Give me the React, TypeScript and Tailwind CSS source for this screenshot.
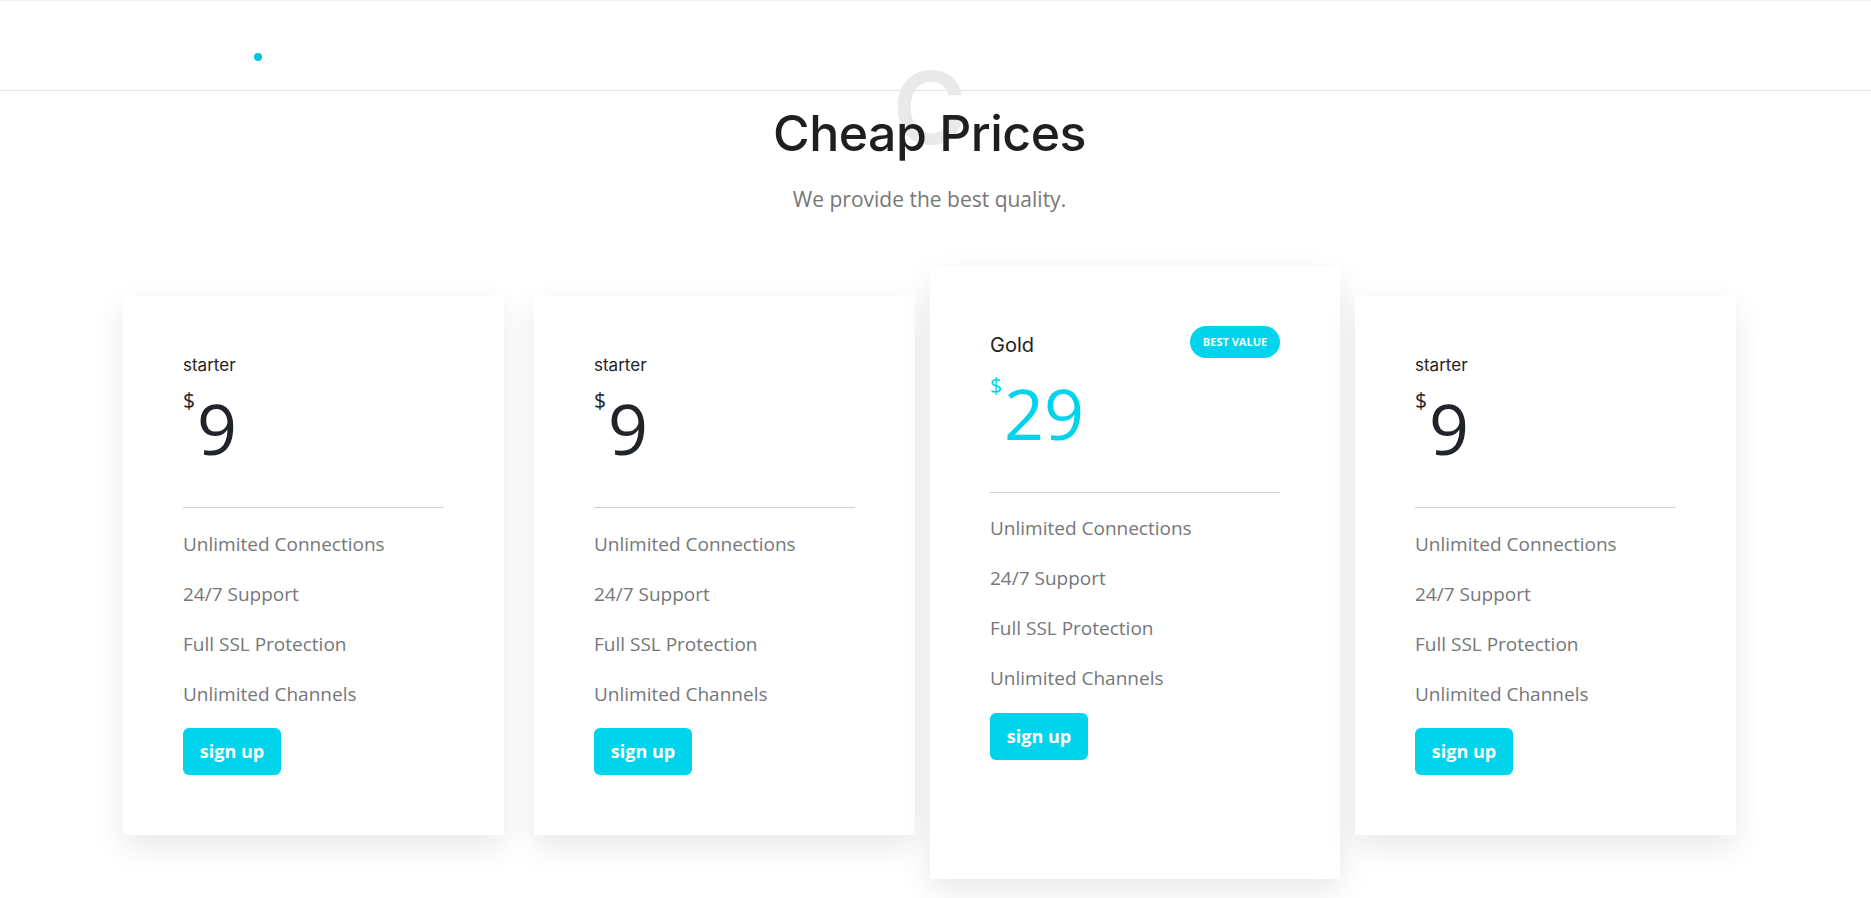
import * as React from "react"

type Plan = {
  name: string
  price: string
  featured?: boolean
}

const plans: Plan[] = [
  { name: "starter", price: "9" },
  { name: "starter", price: "9" },
  { name: "Gold", price: "29", featured: true },
  { name: "starter", price: "9" },
]

const features = [
  "Unlimited Connections",
  "24/7 Support",
  "Full SSL Protection",
  "Unlimited Channels",
]

function PriceCard({ plan }: { plan: Plan }) {
  const gold = !!plan.featured
  return (
    <div
      className={
        gold
          ? "w-[410px] bg-white px-[60px] pt-[60px] pb-[119px] shadow-[0_12px_30px_rgba(0,0,0,0.09)]"
          : "mt-[30px] w-[381px] bg-white px-[60px] pt-[60px] pb-[60px] shadow-[0_12px_30px_rgba(0,0,0,0.09)]"
      }
    >
      {gold ? (
        <div className="flex h-[32px] items-center justify-between">
          <span className="mt-[5px] font-['Inter',sans-serif] text-[20px] text-[#222]">{plan.name}</span>
          <span className="flex h-[32px] w-[90px] items-center justify-center rounded-full bg-[#00d4ec] font-['Open_Sans',sans-serif] text-[11px] font-bold text-white">
            BEST VALUE
          </span>
        </div>
      ) : (
        <div className="h-[24px] font-['Inter',sans-serif] text-[17px] leading-[19px] text-[#222]">
          {plan.name}
        </div>
      )}

      <div
        className={
          gold
            ? "mt-[20px] flex h-[72px] items-start font-['Open_Sans',sans-serif] text-[#00d4ec]"
            : "mt-[13px] flex h-[72px] items-start font-['Open_Sans',sans-serif] text-[#212529]"
        }
      >
        <span className="-mt-[3px] mr-[2px] text-[21px] leading-none">$</span>
        <span className="text-[70px] leading-none">{plan.price}</span>
      </div>

      <div className="mt-[42px] border-t border-[#cfcfcf]" />

      <ul className={gold ? "mt-[10px]" : "mt-[11px]"}>
        {features.map((f) => (
          <li
            key={f}
            className="font-['Open_Sans',sans-serif] text-[19px] leading-[50px] text-[#75777a]"
          >
            {f}
          </li>
        ))}
      </ul>

      <button
        className={
          (gold ? "mt-[10px]" : "mt-[9px]") +
          " h-[47px] w-[98px] rounded-[6px] bg-[#00d4ec] font-['Open_Sans',sans-serif] text-[18px] font-bold text-white"
        }
      >
        sign up
      </button>
    </div>
  )
}

export default function App() {
  return (
    <div className="min-h-[898px] bg-white">
      <header className="h-[91px] border-t border-b border-t-[#f2f2f2] border-b-[#e2e2e2]">
        <div className="ml-[254px] mt-[52px] h-[8px] w-[8px] rounded-full bg-[#00c3e0]" />
      </header>

      <div className="pr-[12px]">
        <div className="relative mt-[17px] flex flex-col items-center">
          <span className="pointer-events-none absolute -top-[50px] left-1/2 -translate-x-1/2 font-['Inter',sans-serif] text-[100px] font-semibold leading-none text-[#e9e9e9]">
            C
          </span>
          <h1 className="relative font-['Inter',sans-serif] text-[50px] font-medium leading-none tracking-[-0.5px] text-[#1f1f1f]">
            Cheap Prices
          </h1>
          <p className="mt-[31px] font-['Open_Sans',sans-serif] text-[21px] leading-none text-[#777]">
            We provide the best quality.
          </p>
        </div>

        <div className="mt-[56px] flex items-start justify-center gap-[15px]">
          {plans.map((p, i) => (
            <div key={i} className={i === 0 ? "mr-[15px]" : ""}>
              <PriceCard plan={p} />
            </div>
          ))}
        </div>
      </div>
    </div>
  )
}
